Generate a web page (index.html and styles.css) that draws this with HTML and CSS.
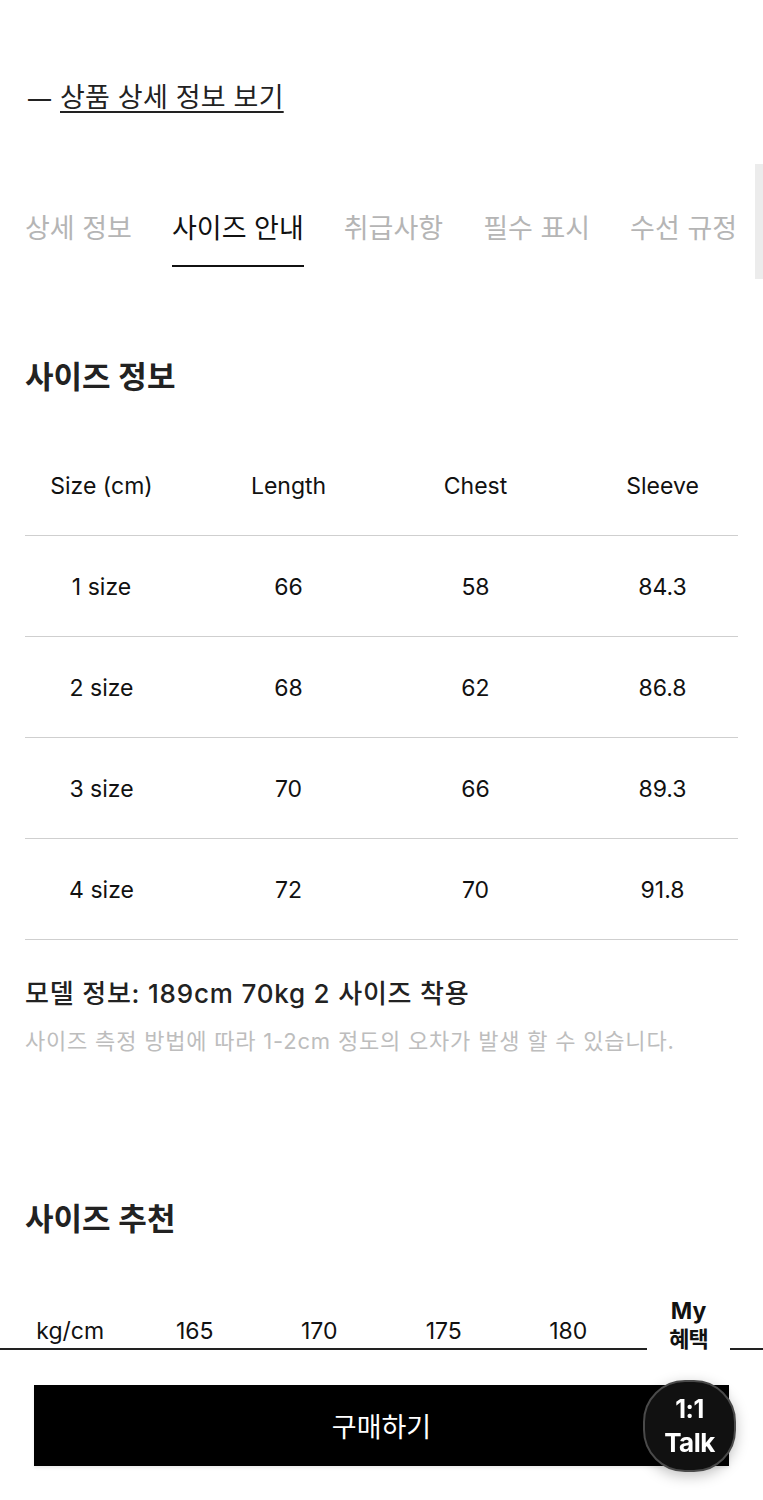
FILE: index.html
```html
<!DOCTYPE html>
<html lang="ko">
<head>
<meta charset="utf-8">
<title>사이즈 안내</title>
<link rel="stylesheet" href="styles.css">
</head>
<body>
<main class="page">
  <p class="detail-link"><span class="dash">—</span> <a href="#" class="link">상품 상세 정보 보기</a></p>

  <nav class="tabs">
    <a class="tab" href="#">상세 정보</a>
    <a class="tab active" href="#">사이즈 안내</a>
    <a class="tab" href="#">취급사항</a>
    <a class="tab" href="#">필수 표시</a>
    <a class="tab" href="#">수선 규정</a>
    <span class="tab-fade"></span>
  </nav>

  <section class="size-info">
    <h2 class="section-title">사이즈 정보</h2>
    <div class="size-table">
      <div class="row head"><span>Size (cm)</span><span>Length</span><span>Chest</span><span>Sleeve</span></div>
      <div class="row"><span>1 size</span><span>66</span><span>58</span><span>84.3</span></div>
      <div class="row"><span>2 size</span><span>68</span><span>62</span><span>86.8</span></div>
      <div class="row"><span>3 size</span><span>70</span><span>66</span><span>89.3</span></div>
      <div class="row"><span>4 size</span><span>72</span><span>70</span><span>91.8</span></div>
    </div>
    <p class="model">모델 정보: 189cm 70kg 2 사이즈 착용</p>
    <p class="note">사이즈 측정 방법에 따라 1-2cm 정도의 오차가 발생 할 수 있습니다.</p>
  </section>

  <section class="size-rec">
    <h2 class="section-title">사이즈 추천</h2>
    <div class="rec-row"><span>kg/cm</span><span>165</span><span>170</span><span>175</span><span>180</span></div>
  </section>
</main>

<a href="#" class="my-benefit"><span>My</span><span class="kr">혜택</span></a>

<div class="bottom-bar">
  <button class="buy">구매하기</button>
</div>
<a href="#" class="talk"><span>1:1</span><span>Talk</span></a>
</body>
</html>
```

FILE: styles.css
```css
* { box-sizing: border-box; }
html, body { margin: 0; padding: 0; background: #fff; }
body {
  font-family: Inter, "Noto Sans CJK KR", sans-serif;
  color: #111;
  overflow: hidden;
}
.page { padding-bottom: 150px; }

.detail-link {
  margin: 81px 0 0 28px;
  font-size: 27px;
  line-height: 34px;
  color: #222;
  letter-spacing: 0.2px;
}
.detail-link .dash { font-size: 23px; margin-right: 1px; }
.detail-link .link {
  color: #222;
  text-decoration: underline;
  text-decoration-thickness: 2px;
  text-underline-offset: 4px;
}

.tabs {
  position: relative;
  display: flex;
  gap: 40px;
  margin-top: 95px;
  padding-left: 25px;
  white-space: nowrap;
}
.tab {
  font-size: 27px;
  line-height: 36px;
  letter-spacing: 0;
  color: #b5b5b5;
  text-decoration: none;
  padding-bottom: 18px;
  border-bottom: 2px solid transparent;
}
.tab.active { color: #111; border-bottom-color: #111; }
.tab-fade {
  position: absolute;
  right: 0;
  top: -47px;
  width: 8px;
  height: 115px;
  background: #ececec;
}

.section-title {
  margin: 0;
  font-size: 31px;
  line-height: 40px;
  font-weight: 600;
  letter-spacing: 0;
  color: #222;
  padding-left: 25px;
}
.size-info .section-title { margin-top: 90px; }

.size-table { margin: 38px 25px 0; }
.row {
  position: relative;
  display: grid;
  grid-template-columns: repeat(4, 187px);
  margin-left: -17px;
  width: calc(100% + 17px);
  height: 101px;
  align-items: center;
}
.row::after {
  content: "";
  position: absolute;
  left: 17px;
  right: 0;
  bottom: 0;
  height: 1px;
  background: #cfcfcf;
}
.row span {
  text-align: center;
  font-size: 23px;
  line-height: 30px;
  color: #111;
}

.model {
  margin: 37px 0 0 25px;
  font-size: 26px;
  line-height: 34px;
  font-weight: 500;
  color: #222;
  letter-spacing: 0.8px;
}
.note {
  margin: 15px 0 0 25px;
  font-size: 22px;
  line-height: 30px;
  color: #bdbdbd;
  letter-spacing: 0.8px;
}

.size-rec .section-title { margin-top: 143px; }
.rec-row {
  margin-top: 61px;
  display: grid;
  grid-template-columns: repeat(5, 124.5px);
  padding: 16px 0 2px 8px;
  border-bottom: 2px solid #222;
}
.rec-row span {
  text-align: center;
  font-size: 23px;
  line-height: 30px;
  color: #111;
}

.my-benefit {
  position: fixed;
  right: 33px;
  bottom: 140px;
  width: 83px;
  height: 70px;
  background: #fff;
  padding-top: 7px;
  display: flex;
  flex-direction: column;
  align-items: center;
  text-decoration: none;
  color: #111;
  font-weight: 700;
}
.my-benefit span { font-size: 23px; line-height: 28px; }
.my-benefit .kr { font-size: 22px; letter-spacing: -1px; }

.bottom-bar {
  position: fixed;
  left: 0;
  right: 0;
  bottom: 0;
  height: 140px;
  background: #fff;
  padding: 25px 34px 0;
}
.buy {
  display: block;
  width: 100%;
  height: 81px;
  background: #000;
  color: #fff;
  border: none;
  font-family: Inter, "Noto Sans CJK KR", sans-serif;
  font-size: 27px;
  letter-spacing: 0;
  box-shadow: 0 2px 3px rgba(0,0,0,0.08);
}

.talk {
  position: fixed;
  right: 27px;
  bottom: 28px;
  width: 93px;
  height: 92px;
  border-radius: 42px;
  background: #111;
  border: 2px solid #4a4a4a;
  box-shadow: 0 4px 14px rgba(0,0,0,0.25);
  display: flex;
  flex-direction: column;
  align-items: center;
  justify-content: center;
  color: #fff;
  text-decoration: none;
  font-weight: 700;
}
.talk span { font-size: 25px; line-height: 33px; letter-spacing: -0.5px; }
.talk span:last-child { font-size: 26px; }
```
